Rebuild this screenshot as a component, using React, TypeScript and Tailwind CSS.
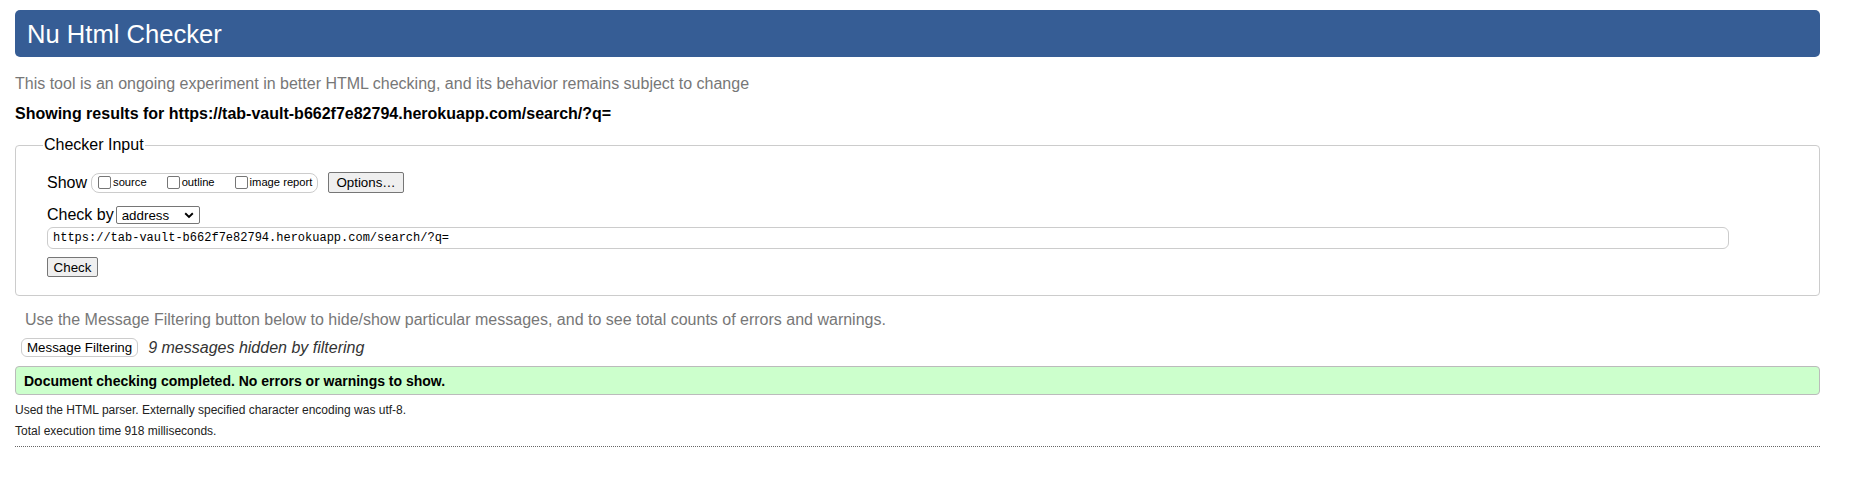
import React from 'react';

const checks = [
  { id: 'source', label: 'source' },
  { id: 'outline', label: 'outline' },
  { id: 'image', label: 'image report' },
];

const url = 'https://tab-vault-b662f7e82794.herokuapp.com/search/?q=';

export default function App() {
  return (
    <div className="min-h-screen bg-white text-black font-['Liberation_Sans',Arial,sans-serif]">
      <div className="pt-[10px] pl-[15px] w-[1820px]">
        {/* Title bar */}
        <header className="h-[47px] rounded-[5px] bg-[#365d95] flex items-center pl-[12px]">
          <h1 className="text-[25.6px] leading-[30px] text-white">Nu Html Checker</h1>
        </header>

        <p className="mt-[18px] text-[16px] leading-[18px] text-[#777]">
          This tool is an ongoing experiment in better HTML checking, and its behavior remains subject to change
        </p>
        <p className="mt-[12px] text-[16px] leading-[18px] font-bold">
          Showing results for {url}
        </p>

        {/* Checker input */}
        <fieldset className="mt-[13px] border border-[#ccc] rounded-[4px] pl-[31px] pr-[16px] pt-[18px] pb-[18px]">
          <legend className="-ml-[4px] px-[1px] text-[16px] leading-[18px]">Checker Input</legend>

          <div className="flex items-center h-[21px]">
            <span className="text-[16px] leading-[18px]">Show</span>
            <div className="ml-[4px] h-[20px] flex items-center border border-[#ccc] rounded-[8px] pl-[6px] pr-[5px]">
              {checks.map((c, i) => (
                <label key={c.id} className={`flex items-center ${i > 0 ? 'ml-[20px]' : ''}`}>
                  <span className="w-[13px] h-[13px] border border-[#767676] rounded-[2px] bg-white" />
                  <span className="ml-[2px] text-[11.2px] leading-[13px]">{c.label}</span>
                </label>
              ))}
            </div>
            <button className="ml-[10px] h-[21px] px-[7px] bg-[#efefef] border border-[#767676] rounded-[2px] text-[13.33px] leading-[15px]">
              Options…
            </button>
          </div>

          <div className="mt-[12px] flex items-center h-[20px]">
            <span className="text-[16px] leading-[18px]">Check by</span>
            <div className="ml-[2px] w-[84px] h-[18px] flex items-center justify-between border border-[#767676] rounded-[2px] pl-[5px] pr-[5px] bg-white">
              <span className="text-[13.33px] leading-[15px]">address</span>
              <svg width="10" height="7" viewBox="0 0 10 7" fill="none">
                <path d="M1.2 1.3 5 5 8.8 1.3" stroke="#000" strokeWidth="1.9" />
              </svg>
            </div>
          </div>

          <input
            readOnly
            value={url}
            className="mt-[2px] block w-[1682px] h-[22px] border border-[#ccc] rounded-[6px] pl-[5px] text-[12px] font-['Liberation_Mono','DejaVu_Sans_Mono',monospace] outline-none"
          />

          <button className="mt-[8px] block h-[20px] w-[51px] bg-[#efefef] border border-[#767676] rounded-[2px] text-[13.33px] leading-[15px]">
            Check
          </button>
        </fieldset>

        <p className="mt-[15px] ml-[10px] text-[16px] leading-[18px] text-[#777]">
          Use the Message Filtering button below to hide/show particular messages, and to see total counts of errors and warnings.
        </p>

        <div className="mt-[9px] ml-[6px] flex items-center h-[19px]">
          <button className="h-[19px] px-[5px] bg-white border border-[#ccc] rounded-[6px] text-[13.33px] leading-[15px]">
            Message Filtering
          </button>
          <span className="ml-[10px] text-[16px] leading-[18px] italic text-[#333]">9 messages hidden by filtering</span>
        </div>

        <div className="mt-[9px] h-[29px] flex items-center bg-[#ccffcc] border border-[#bbb] rounded-[4px] pl-[8px]">
          <span className="text-[14px] leading-[16px] font-bold">
            Document checking completed. No errors or warnings to show.
          </span>
        </div>

        <p className="mt-[8px] text-[12px] leading-[14px] text-[#222]">
          Used the HTML parser. Externally specified character encoding was utf-8.
        </p>
        <p className="mt-[7px] text-[12px] leading-[14px] text-[#222]">
          Total execution time 918 milliseconds.
        </p>

        <hr className="mt-[8px] border-0 border-t border-dotted border-[#666]" />
      </div>
    </div>
  );
}
